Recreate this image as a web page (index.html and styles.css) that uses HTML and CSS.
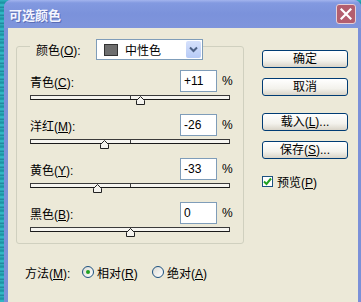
FILE: index.html
```html
<!DOCTYPE html>
<html lang="zh-CN">
<head>
    <meta charset="UTF-8">
    <meta name="viewport" content="width=device-width, initial-scale=1.0">
    <title>可选颜色</title>
    <link rel="stylesheet" href="styles.css">
</head>
<body>
    <div class="window">
        <div class="titlebar">
            <span class="title">可选颜色</span>
            <span class="close">
                <svg width="12" height="12" viewBox="0 0 12 12"><path d="M1.5 1.5 L10.5 10.5 M10.5 1.5 L1.5 10.5" stroke="#fff" stroke-width="2.2" stroke-linecap="square"/></svg>
            </span>
        </div>

        <div class="client">
            <div class="top">
                <fieldset class="group">
                    <legend>
                        <span class="legend-label">颜色(<u>O</u>):</span>
                        <div class="select">
                            <span class="swatch"></span>
                            <span class="select-text">中性色</span>
                            <span class="select-btn">
                                <svg width="9" height="7" viewBox="0 0 9 7"><path d="M1 1.5 L4.5 5 L8 1.5" fill="none" stroke="#4d6185" stroke-width="2"/></svg>
                            </span>
                        </div>
                    </legend>

                    <div class="row">
                        <div class="row-head">
                            <span>青色(<u>C</u>):</span>
                            <span class="num">+11</span>
                            <span class="pct">%</span>
                        </div>
                        <div class="track"><i class="tick"></i>
                            <svg class="thumb" style="left:55.5%" width="9" height="9" viewBox="0 0 9 9"><path d="M0.5 8.5 L0.5 4.5 L4.5 0.5 L8.5 4.5 L8.5 8.5 Z" fill="#f4f3ee" stroke="#222"/></svg>
                        </div>
                    </div>

                    <div class="row">
                        <div class="row-head">
                            <span>洋红(<u>M</u>):</span>
                            <span class="num">-26</span>
                            <span class="pct">%</span>
                        </div>
                        <div class="track"><i class="tick"></i>
                            <svg class="thumb" style="left:37%" width="9" height="9" viewBox="0 0 9 9"><path d="M0.5 8.5 L0.5 4.5 L4.5 0.5 L8.5 4.5 L8.5 8.5 Z" fill="#f4f3ee" stroke="#222"/></svg>
                        </div>
                    </div>

                    <div class="row">
                        <div class="row-head">
                            <span>黄色(<u>Y</u>):</span>
                            <span class="num">-33</span>
                            <span class="pct">%</span>
                        </div>
                        <div class="track"><i class="tick"></i>
                            <svg class="thumb" style="left:33.5%" width="9" height="9" viewBox="0 0 9 9"><path d="M0.5 8.5 L0.5 4.5 L4.5 0.5 L8.5 4.5 L8.5 8.5 Z" fill="#f4f3ee" stroke="#222"/></svg>
                        </div>
                    </div>

                    <div class="row">
                        <div class="row-head">
                            <span>黑色(<u>B</u>):</span>
                            <span class="num">0</span>
                            <span class="pct">%</span>
                        </div>
                        <div class="track"><i class="tick"></i>
                            <svg class="thumb" style="left:50%" width="9" height="9" viewBox="0 0 9 9"><path d="M0.5 8.5 L0.5 4.5 L4.5 0.5 L8.5 4.5 L8.5 8.5 Z" fill="#f4f3ee" stroke="#222"/></svg>
                        </div>
                    </div>
                </fieldset>

                <div class="side">
                    <button class="btn">确定</button>
                    <button class="btn">取消</button>
                    <button class="btn btn-gap">载入(<u>L</u>)...</button>
                    <button class="btn">保存(<u>S</u>)...</button>
                    <div class="check-row">
                        <span class="checkbox">
                            <svg width="9" height="9" viewBox="0 0 9 9"><path d="M1 4.5 L3.5 7 L8 1.5" fill="none" stroke="#21a121" stroke-width="2"/></svg>
                        </span>
                        <span>预览(<u>P</u>)</span>
                    </div>
                </div>
            </div>

            <div class="method">
                <span class="method-label">方法(<u>M</u>):</span>
                <span class="radio checked"></span>
                <span class="radio-text">相对(<u>R</u>)</span>
                <span class="radio"></span>
                <span class="radio-text">绝对(<u>A</u>)</span>
            </div>
        </div>
    </div>
</body>
</html>
```

FILE: styles.css
```css
body {
    margin: 0;
    height: 302px;
    overflow: hidden;
    background: repeating-linear-gradient(to bottom, #2fb2c0 0px, #1a8f9e 3px, #36c2cf 5px, #1d7f95 8px);
    font-family: "Liberation Sans", "Noto Sans CJK SC", sans-serif;
    font-size: 12px;
    color: #000;
}

u {
    text-decoration: underline;
    text-underline-offset: 1px;
}

.window {
    margin-left: 4px;
    width: 357px;
    height: 302px;
    background: #7b90d8;
    border-radius: 7px 7px 0 0;
}

.titlebar {
    height: 28px;
    display: flex;
    align-items: center;
    justify-content: space-between;
    padding: 0 5px;
    border-radius: 7px 7px 0 0;
    background: linear-gradient(to bottom, #a3b4ee 0px, #8299e0 3px, #7b92db 14px, #7f95dc 28px);
}

.title {
    color: #f4f6ff;
    font-family: "Noto Sans CJK SC", sans-serif;
    font-weight: bold;
    font-size: 13px;
    text-shadow: 1px 1px 0 #5a6db5;
}

.close {
    width: 18px;
    height: 18px;
    border: 1px solid #e6d0d6;
    border-radius: 3px;
    background: #b35e6e;
    display: flex;
    align-items: center;
    justify-content: center;
}

.client {
    margin: 0 3px 0 4px;
    height: 274px;
    background: #ece9d8;
    padding: 4px 0 0 8px;
    box-sizing: border-box;
}

.top {
    display: flex;
    align-items: flex-start;
}

.group {
    margin: 0;
    width: 200px;
    padding: 10px 13px 11px;
    border: 1px solid #d0d0bf;
    border-radius: 3px;
}

.group legend {
    display: flex;
    align-items: center;
    padding: 7px 0 0 6px;
}

.legend-label {
    width: 60px;
}

.select {
    width: 107px;
    height: 21px;
    box-sizing: border-box;
    border: 1px solid #7f9db9;
    background: #fff;
    display: flex;
    align-items: center;
    padding-left: 7px;
    position: relative;
}

.swatch {
    width: 12px;
    height: 10px;
    border: 1px solid #333;
    background: #6e6e6e;
}

.select-text {
    margin-left: 7px;
}

.select-btn {
    position: absolute;
    right: 1px;
    top: 1px;
    width: 15px;
    height: 17px;
    border-radius: 2px;
    background: linear-gradient(to bottom, #d6e1fc, #b7cbf6);
    display: flex;
    align-items: center;
    justify-content: center;
}

.row {
    margin-bottom: 14px;
}

.row:last-child {
    margin-bottom: 0;
}

.row-head {
    display: grid;
    grid-template-columns: 150px 37px 13px;
    align-items: center;
    height: 22px;
}

.num {
    height: 22px;
    box-sizing: border-box;
    border: 1px solid #7f9db9;
    background: #fff;
    padding-left: 3px;
    line-height: 20px;
}

.pct {
    padding-left: 5px;
}

.track {
    position: relative;
    margin-top: 3px;
    height: 5px;
    box-sizing: border-box;
    border: 1px solid #3a3a3a;
    border-bottom-color: #1a1a1a;
    background: #f6f5f0;
}

.tick {
    position: absolute;
    left: 50%;
    top: 0;
    width: 1px;
    height: 3px;
    background: #3a3a3a;
}

.thumb {
    position: absolute;
    top: 0;
    margin-left: -4.5px;
}

.side {
    margin: 18px 0 0 18px;
    display: flex;
    flex-direction: column;
    align-items: flex-start;
}

.btn {
    width: 86px;
    height: 18px;
    margin: 0 0 10px 0;
    padding: 0;
    border: 1px solid #003c74;
    border-radius: 3px;
    background: linear-gradient(to bottom, #ffffff 0%, #f3f2ec 60%, #d9d4c8 100%);
    font-family: "Liberation Sans", "Noto Sans CJK SC", sans-serif;
    font-size: 12px;
    color: #000;
    line-height: 16px;
}

.btn-gap {
    margin-top: 7px;
}

.check-row {
    display: flex;
    align-items: center;
    margin-top: 4px;
}

.checkbox {
    width: 9px;
    height: 9px;
    border: 1px solid #1c5180;
    background: #fff;
    margin-right: 4px;
    display: flex;
    align-items: center;
    justify-content: center;
}

.method {
    display: flex;
    align-items: center;
    height: 16px;
    margin-top: 20px;
    padding-left: 9px;
}

.method-label {
    width: 57px;
}

.radio {
    width: 10px;
    height: 10px;
    border: 1px solid #1c5180;
    border-radius: 50%;
    background: linear-gradient(to bottom right, #dcdbd4, #ffffff);
    margin-right: 3px;
    display: flex;
    align-items: center;
    justify-content: center;
}

.radio.checked::after {
    content: "";
    width: 4px;
    height: 4px;
    border-radius: 50%;
    background: #21a121;
}

.radio-text {
    width: 55px;
}
```
